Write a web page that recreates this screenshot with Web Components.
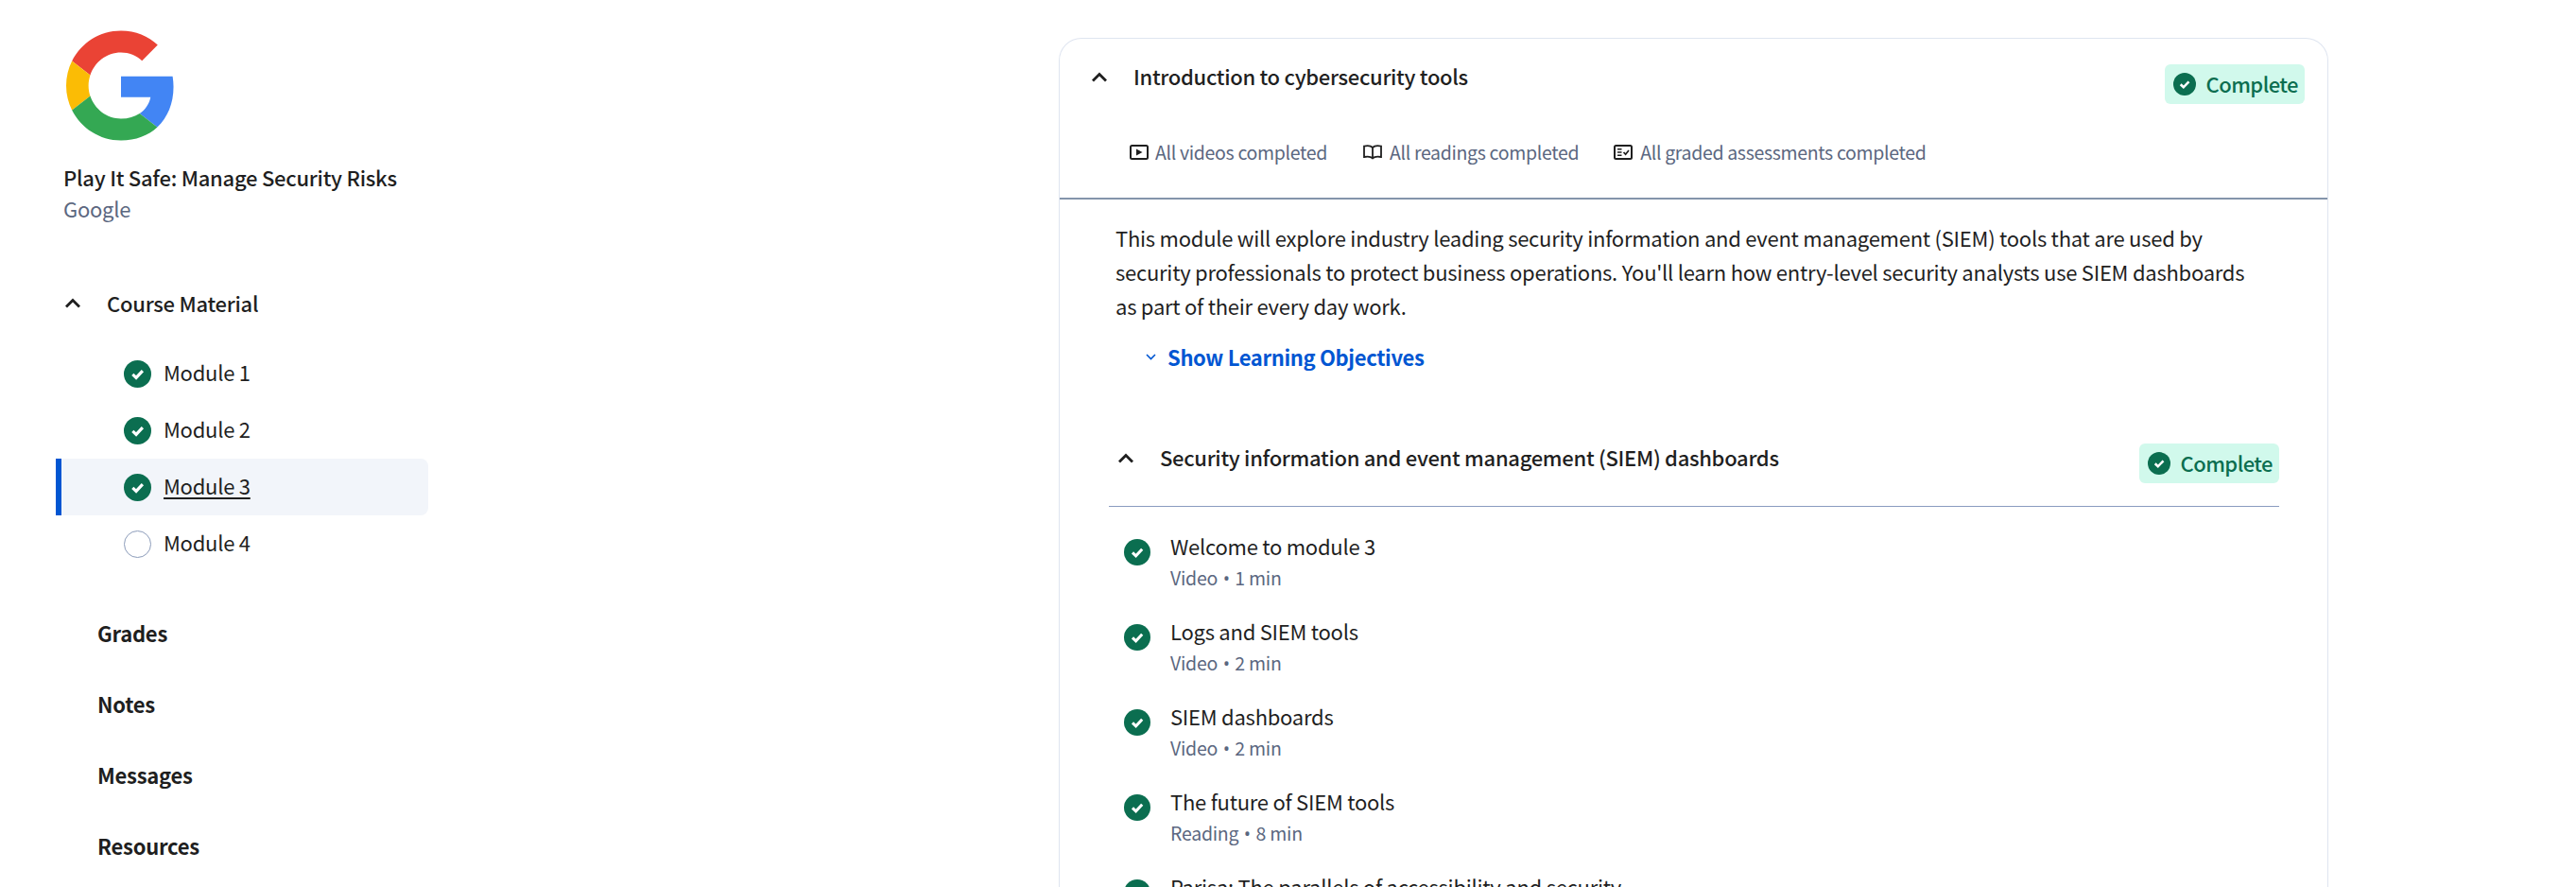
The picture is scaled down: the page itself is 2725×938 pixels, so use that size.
<!DOCTYPE html>
<html lang="en">
<head>
<meta charset="utf-8">
<title>Play It Safe: Manage Security Risks</title>
<style>
  html, body { margin: 0; height: 100%; overflow: hidden; background: #fff; }
  body { font-family: "Noto Sans CJK SC", "Noto Sans", sans-serif; color: #1f1f1f; font-size: 22px; letter-spacing: -0.25px; }
  .page { display: grid; grid-template-columns: 1120px 1343px; height: 938px; overflow: hidden; }
</style>
</head>
<body>
<div class="page">
  <course-sidebar>
    <module-link status="done">Module 1</module-link>
    <module-link status="done">Module 2</module-link>
    <module-link status="done" active>Module 3</module-link>
    <module-link>Module 4</module-link>
    <nav-link slot="nav">Grades</nav-link>
    <nav-link slot="nav">Notes</nav-link>
    <nav-link slot="nav">Messages</nav-link>
    <nav-link slot="nav">Resources</nav-link>
  </course-sidebar>
  <module-card heading="Introduction to cybersecurity tools">
    <span slot="intro">This module will explore industry leading security information and event management (SIEM) tools that are used by security professionals to protect business operations. You'll learn how entry-level security analysts use SIEM dashboards as part of their every day work.</span>
    <lesson-group heading="Security information and event management (SIEM) dashboards">
      <lesson-row kind="Video" time="1 min">Welcome to module 3</lesson-row>
      <lesson-row kind="Video" time="2 min">Logs and SIEM tools</lesson-row>
      <lesson-row kind="Video" time="2 min">SIEM dashboards</lesson-row>
      <lesson-row kind="Reading" time="8 min">The future of SIEM tools</lesson-row>
      <lesson-row kind="Video" time="3 min">Parisa: The parallels of accessibility and security</lesson-row>
    </lesson-group>
  </module-card>
</div>

<script>
  const chevronUp = `<svg width="18" height="12" viewBox="0 0 18 12" fill="none"><path d="M2 10.5 L9 3.5 L16 10.5" stroke="#1f1f1f" stroke-width="2.8"/></svg>`;

  class checkIcon extends HTMLElement {
    constructor() {
      super();
      this.attachShadow({ mode: "open" });
    }
    connectedCallback() {
      const size = this.getAttribute("size") || 28;
      this.shadowRoot.innerHTML = `
        <style>
          :host { display: inline-flex; flex: none; }
          svg { display: block; }
        </style>
        <svg width="${size}" height="${size}" viewBox="0 0 28 28">
          <circle cx="14" cy="14" r="14" fill="#0b6e50"/>
          <path d="M9 14.3 L12.6 17.8 L19.2 10.8" fill="none" stroke="#fff" stroke-width="3"/>
        </svg>
      `;
    }
  }
  customElements.define("check-icon", checkIcon);

  class statusBadge extends HTMLElement {
    constructor() {
      super();
      this.attachShadow({ mode: "open" });
      this.shadowRoot.innerHTML = `
        <style>
          :host {
            display: inline-flex;
            align-items: center;
            gap: 10px;
            height: 42px;
            padding: 0 7px 0 9px;
            border-radius: 6px;
            background: #d1f9ec;
            color: #0b6e50;
            font-size: 22px;
            letter-spacing: -0.55px;
            line-height: 30px;
            font-weight: 500;
          }
          span { padding-bottom: 3px; }
        </style>
        <check-icon size="24"></check-icon><span>Complete</span>
      `;
    }
  }
  customElements.define("status-badge", statusBadge);

  class moduleLink extends HTMLElement {
    constructor() {
      super();
      this.attachShadow({ mode: "open" });
    }
    connectedCallback() {
      const done = this.getAttribute("status") === "done";
      const icon = done
        ? `<check-icon size="29"></check-icon>`
        : `<span class="todo"></span>`;
      this.shadowRoot.innerHTML = `
        <style>
          :host {
            display: flex;
            align-items: center;
            gap: 13px;
            height: 60px;
            padding-left: 66px;
            border-left: 6px solid transparent;
            border-radius: 0 8px 8px 0;
            line-height: 30px;
          }
          :host([active]) { background: #f2f5fa; border-left-color: #0056d2; }
          :host([active]) .label { text-decoration: underline; text-decoration-thickness: 2px; text-underline-offset: 3px; }
          .label { padding-bottom: 5px; }
          .todo {
            flex: none;
            box-sizing: border-box;
            width: 29px;
            height: 29px;
            border: 1px solid #8c9cba;
            border-radius: 50%;
          }
        </style>
        ${icon}<span class="label"><slot></slot></span>
      `;
    }
  }
  customElements.define("module-link", moduleLink);

  class navLink extends HTMLElement {
    constructor() {
      super();
      this.attachShadow({ mode: "open" });
      this.shadowRoot.innerHTML = `
        <style>
          :host {
            display: flex;
            align-items: center;
            height: 75px;
            padding-left: 44px;
            font-weight: 700;
            line-height: 30px;
          }
          span { padding-bottom: 2px; }
        </style>
        <span><slot></slot></span>
      `;
    }
  }
  customElements.define("nav-link", navLink);

  class courseSidebar extends HTMLElement {
    constructor() {
      super();
      this.attachShadow({ mode: "open" });
      this.shadowRoot.innerHTML = `
        <style>
          :host { display: block; padding: 32px 0 0 59px; }
          .inner { width: 394px; }
          .logo { display: block; margin-left: 11px; }
          .title { margin: 23px 0 0 8px; font-weight: 500; line-height: 30px; }
          .org { margin: 3px 0 0 8px; color: #5b6780; line-height: 30px; }
          .material {
            display: flex;
            align-items: center;
            gap: 27px;
            margin: 70px 0 30px 9px;
            font-weight: 500;
            line-height: 30px;
          }
          .nav { margin-top: 27px; }
        </style>
        <div class="inner">
          <svg class="logo" width="116" height="117" viewBox="0 0 48 48">
            <path fill="#EA4335" d="M24 9.5c3.54 0 6.71 1.22 9.21 3.6l6.85-6.85C35.9 2.38 30.47 0 24 0 14.62 0 6.51 5.38 2.56 13.22l7.98 6.19C12.43 13.72 17.74 9.5 24 9.5z"/>
            <path fill="#4285F4" d="M46.98 24.55c0-1.57-.15-3.09-.38-4.55H24v9.02h12.94c-.58 2.96-2.26 5.48-4.78 7.18l7.73 6c4.51-4.18 7.09-10.36 7.09-17.65z"/>
            <path fill="#FBBC05" d="M10.53 28.59c-.48-1.45-.76-2.99-.76-4.59s.27-3.14.76-4.59l-7.98-6.19C.92 16.46 0 20.12 0 24c0 3.88.92 7.54 2.56 10.78l7.97-6.19z"/>
            <path fill="#34A853" d="M24 48c6.48 0 11.93-2.13 15.89-5.81l-7.73-6c-2.15 1.45-4.92 2.3-8.16 2.3-6.26 0-11.57-4.22-13.47-9.91l-7.98 6.19C6.51 42.62 14.62 48 24 48z"/>
          </svg>
          <div class="title">Play It Safe: Manage Security Risks</div>
          <div class="org">Google</div>
          <div class="material">${chevronUp}<span>Course Material</span></div>
          <slot></slot>
          <div class="nav"><slot name="nav"></slot></div>
        </div>
      `;
    }
  }
  customElements.define("course-sidebar", courseSidebar);

  class moduleCard extends HTMLElement {
    constructor() {
      super();
      this.attachShadow({ mode: "open" });
    }
    connectedCallback() {
      this.shadowRoot.innerHTML = `
        <style>
          :host {
            display: block;
            margin-top: 40px;
            border: 1px solid #dfe5f0;
            border-bottom: 0;
            border-radius: 24px 24px 0 0;
            line-height: 36px;
          }
          .head { height: 168px; border-bottom: 2px solid #8495ab; }
          .top { display: flex; align-items: flex-start; padding: 24px 24px 0 33px; }
          .top h2 { flex: 1; margin: 0 0 0 27px; font-size: 22px; font-weight: 500; letter-spacing: -0.3px; line-height: 30px; }
          .top svg { margin-top: 10px; }
          .top status-badge { margin-top: 3px; }
          .meta {
            display: flex;
            gap: 37px;
            margin: 38px 0 0 74px;
            color: #5b6780;
            font-size: 19.5px;
            letter-spacing: -0.33px;
            line-height: 26px;
          }
          .meta span { display: inline-flex; align-items: center; gap: 7px; }
          .meta span:last-child { gap: 8px; }
          .body { padding: 22px 51px 0 59px; }
          ::slotted([slot="intro"]) { display: block; max-width: 1210px; }
          .show {
            display: flex;
            align-items: center;
            gap: 12px;
            margin: 21px 0 0 32px;
            color: #0056d2;
            font-weight: 700;
            letter-spacing: -0.35px;
            line-height: 30px;
          }
        </style>
        <div class="head">
          <div class="top">
            ${chevronUp}
            <h2>${this.getAttribute("heading")}</h2>
            <status-badge></status-badge>
          </div>
          <div class="meta">
            <span>
              <svg width="20" height="16" viewBox="0 0 20 16"><rect x="1" y="1" width="18" height="14" rx="1.5" fill="none" stroke="#1f1f1f" stroke-width="2"/><path d="M7 4.5 L13.5 8 L7 11.5 Z" fill="#1f1f1f"/></svg>
              All videos completed
            </span>
            <span>
              <svg width="22" height="16" viewBox="0 0 22 16" fill="none" stroke="#1f1f1f" stroke-width="1.8"><path d="M11 3 C9 1 5 1 2 1.6 V13 C5 12.4 9 12.4 11 14.4 C13 12.4 17 12.4 20 13 V1.6 C17 1 13 1 11 3 Z M11 3 V14.4"/></svg>
              All readings completed
            </span>
            <span>
              <svg width="20" height="16" viewBox="0 0 20 16" fill="none" stroke="#1f1f1f"><rect x="1" y="1" width="18" height="14" rx="1.5" stroke-width="2"/><path d="M4 4.8 H8.5 M4 8 H8.5 M4 11.2 H8.5" stroke-width="1.5"/><path d="M10.5 8 L12.6 10.2 L16 6" stroke-width="1.7"/></svg>
              All graded assessments completed
            </span>
          </div>
        </div>
        <div class="body">
          <slot name="intro"></slot>
          <div class="show">
            <svg width="11" height="7" viewBox="0 0 11 7" fill="none"><path d="M1 1 L5.5 5.5 L10 1" stroke="#0056d2" stroke-width="1.6"/></svg>
            <span>Show Learning Objectives</span>
          </div>
          <slot></slot>
        </div>
      `;
    }
  }
  customElements.define("module-card", moduleCard);

  class lessonGroup extends HTMLElement {
    constructor() {
      super();
      this.attachShadow({ mode: "open" });
    }
    connectedCallback() {
      this.shadowRoot.innerHTML = `
        <style>
          :host { display: block; margin: 76px 0 0 -7px; }
          .head {
            display: flex;
            align-items: flex-start;
            height: 67px;
            padding-left: 9px;
            border-bottom: 1px solid #8a9cc0;
          }
          .head svg { margin-top: 10px; }
          h3 { flex: 1; margin: 0 0 0 27px; font-size: 22px; font-weight: 500; letter-spacing: -0.3px; line-height: 30px; }
          status-badge { margin-top: 1px; }
          .list { padding-top: 17px; }
        </style>
        <div class="head">
          ${chevronUp}
          <h3>${this.getAttribute("heading")}</h3>
          <status-badge></status-badge>
        </div>
        <div class="list"><slot></slot></div>
      `;
    }
  }
  customElements.define("lesson-group", lessonGroup);

  class lessonRow extends HTMLElement {
    constructor() {
      super();
      this.attachShadow({ mode: "open" });
    }
    connectedCallback() {
      this.shadowRoot.innerHTML = `
        <style>
          :host {
            display: flex;
            align-items: flex-start;
            gap: 21px;
            height: 90px;
            padding-left: 16px;
          }
          check-icon { margin-top: 17px; }
          .name { line-height: 30px; margin-top: 9px; }
          .meta { color: #5b6780; font-size: 19.5px; line-height: 26px; margin-top: 6px; }
          .dot { font-family: "Open Sans", sans-serif; padding: 0 1.5px; }
        </style>
        <check-icon size="28"></check-icon>
        <div>
          <div class="name"><slot></slot></div>
          <div class="meta">${this.getAttribute("kind")} <span class="dot">•</span> ${this.getAttribute("time")}</div>
        </div>
      `;
    }
  }
  customElements.define("lesson-row", lessonRow);
</script>
</body>
</html>
